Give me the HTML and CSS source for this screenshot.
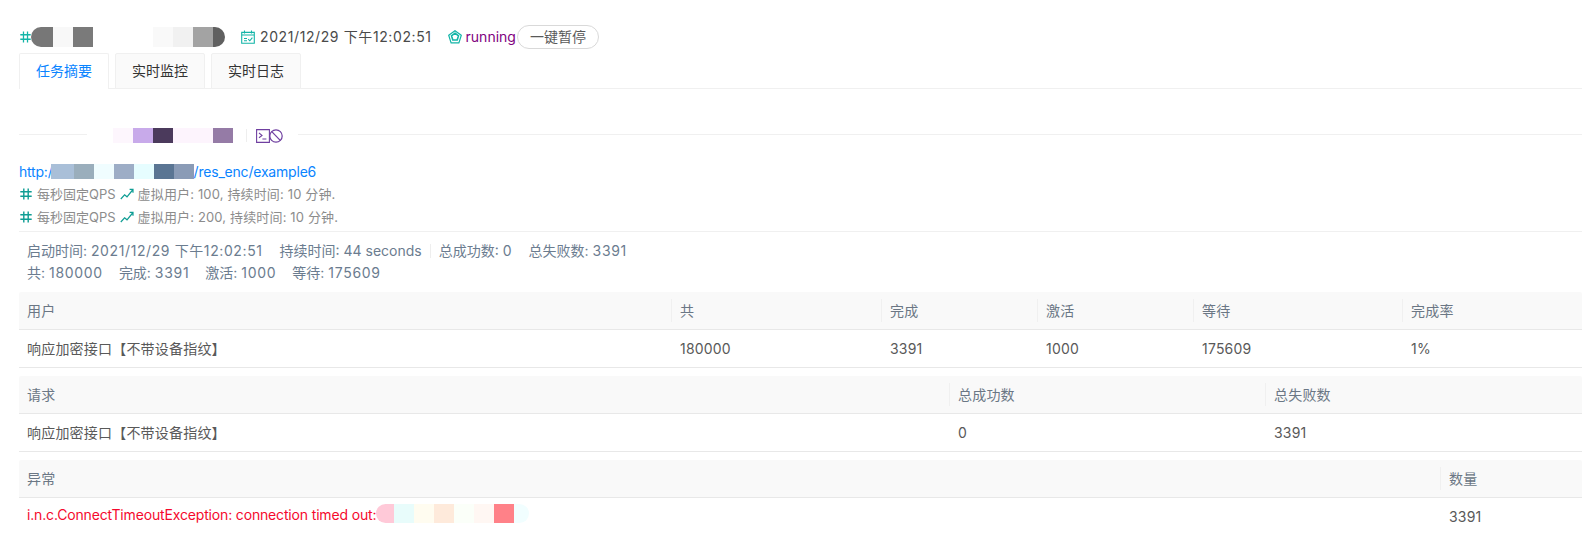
FILE: index.html
```html
<!DOCTYPE html>
<html lang="en">
<head>
    <meta charset="UTF-8">
    <title>任务摘要</title>
    <link rel="stylesheet" href="styles.css">
</head>
<body>
    <div class="page-header">
        <svg class="icon-hash" viewBox="0 0 12 12" preserveAspectRatio="none"><path d="M3.8 .5V11.5M8.2 .5V11.5M.3 3.8H11.7M.3 8.2H11.7"/></svg>
        <span class="mosaic mosaic-name"><i></i><i></i><i></i></span>
        <span class="mosaic mosaic-name2"><i></i><i></i><i></i><i></i></span>
        <svg class="icon-date" viewBox="0 0 14 14"><path d="M.7 2.4H13.3V13.3H.7ZM.7 5H13.3M3.5 .6V3.6M10.5 .6V3.6M3 8.5H6M7.2 9.2L8.8 10.8 11.4 7.6M3 10.8H6"/></svg>
        <span class="start-date">2021/12/29 下午12:02:51</span>
        <svg class="icon-state" viewBox="0 0 14 14"><path class="state-outer" d="M7 .7L13.3 5.3 10.9 12.9H3.1L.7 5.3Z"/><path class="state-inner" d="M7 3.2L10.5 5.8 9.2 10H4.8L3.5 5.8Z"/></svg>
        <span class="state">running</span>
        <button class="pause-btn">一键暂停</button>
    </div>

    <div class="tabs">
        <div class="tab tab-active">任务摘要</div>
        <div class="tab">实时监控</div>
        <div class="tab">实时日志</div>
    </div>

    <div class="divider">
        <span class="mosaic mosaic-title"><i></i><i></i><i></i><i></i><i></i></span>
        <span class="divider-sep"></span>
        <svg class="icon-term" viewBox="0 0 14 14"><path d="M.6 .6H13.4V13.4H.6ZM3 4L6 6.4 3 8.8M6.4 10H10.4"/></svg>
        <svg class="icon-stop" viewBox="0 0 14 14"><circle cx="7" cy="7" r="6.2"/><path d="M2.8 2.6L11.2 11.4"/></svg>
    </div>

    <div class="target-url">http:/<span class="mosaic mosaic-url"><i></i><i></i><i></i><i></i><i></i><i></i><i></i></span>/res_enc/example6</div>
    <div class="load-line">
        <svg class="icon-hash-sm" viewBox="0 0 12 12"><path d="M3.8 .5V11.5M8.2 .5V11.5M.3 3.8H11.7M.3 8.2H11.7"/></svg>
        <span>每秒固定QPS</span>
        <svg class="icon-rise" viewBox="0 0 14 12"><path d="M.8 11L4.6 6.8 7 8.8 12.6 2M9.6 1.4H13V4.8"/></svg>
        <span class="load-desc">虚拟用户: 100, 持续时间: 10 分钟.</span>
    </div>
    <div class="load-line">
        <svg class="icon-hash-sm" viewBox="0 0 12 12"><path d="M3.8 .5V11.5M8.2 .5V11.5M.3 3.8H11.7M.3 8.2H11.7"/></svg>
        <span>每秒固定QPS</span>
        <svg class="icon-rise" viewBox="0 0 14 12"><path d="M.8 11L4.6 6.8 7 8.8 12.6 2M9.6 1.4H13V4.8"/></svg>
        <span class="load-desc">虚拟用户: 200, 持续时间: 10 分钟.</span>
    </div>

    <div class="stats">
        <div class="stats-row">
            <span>启动时间: <span class="num-date">2021/12/29 下午12:02:51</span></span>
            <span>持续时间: 44 seconds</span>
            <span class="stats-sep"></span>
            <span>总成功数: 0</span>
            <span>总失败数: <span class="num">3391</span></span>
        </div>
        <div class="stats-row stats-row-tight">
            <span>共: <span class="num">180000</span></span>
            <span>完成: <span class="num">3391</span></span>
            <span>激活: <span class="num">1000</span></span>
            <span>等待: <span class="num">175609</span></span>
        </div>
    </div>

    <table class="grid grid-users">
        <thead>
            <tr><th>用户</th><th>共</th><th>完成</th><th>激活</th><th>等待</th><th>完成率</th></tr>
        </thead>
        <tbody>
            <tr><td>响应加密接口【不带设备指纹】</td><td>180000</td><td>3391</td><td>1000</td><td>175609</td><td>1%</td></tr>
        </tbody>
    </table>

    <table class="grid grid-requests">
        <thead>
            <tr><th>请求</th><th>总成功数</th><th>总失败数</th></tr>
        </thead>
        <tbody>
            <tr><td>响应加密接口【不带设备指纹】</td><td>0</td><td>3391</td></tr>
        </tbody>
    </table>

    <table class="grid grid-errors">
        <thead>
            <tr><th>异常</th><th>数量</th></tr>
        </thead>
        <tbody>
            <tr><td class="error-text">i.n.c.ConnectTimeoutException: connection timed out:<span class="mosaic mosaic-error"><i></i><i></i><i></i><i></i><i></i><i></i><i></i><i></i></span></td><td>3391</td></tr>
        </tbody>
    </table>
</body>
</html>
```

FILE: styles.css
```css
html, body {
    height: 533px;
    overflow: hidden;
}
body {
    margin: 0;
    padding: 0 5px 0 19px;
    background-color: #fff;
    color: #595959;
    font-family: Inter, "Noto Sans CJK SC", sans-serif;
    font-size: 14px;
    line-height: 22px;
}
svg {
    flex: none;
    fill: none;
}

/* blurred-out bits of the screenshot */
.mosaic {
    display: inline-flex;
    vertical-align: top;
}
.mosaic i {
    display: block;
    width: 20px;
    height: 100%;
}

.page-header {
    display: flex;
    align-items: center;
    height: 24px;
    padding-top: 25px;
}
.icon-hash {
    width: 11px;
    height: 12px;
    margin-left: 1px;
    stroke: #13b5a8;
    stroke-width: 1.4;
}
.mosaic-name {
    height: 20px;
    border-radius: 10px 0 0 10px;
    overflow: hidden;
}
.mosaic-name i:nth-child(1) { width: 22px; background: #777; }
.mosaic-name i:nth-child(2) { background: #f8f8f8; }
.mosaic-name i:nth-child(3) { background: #7a7a7a; }
.mosaic-name2 {
    height: 20px;
    margin-left: 60px;
    border-radius: 0 10px 10px 0;
    overflow: hidden;
}
.mosaic-name2 i:nth-child(1) { background: #f9f9f9; }
.mosaic-name2 i:nth-child(2) { background: #f1f1f1; }
.mosaic-name2 i:nth-child(3) { background: #a3a3a3; }
.mosaic-name2 i:nth-child(4) { width: 12px; background: #606060; }
.icon-date {
    width: 14px;
    height: 14px;
    margin-left: 16px;
    stroke: #13b5a8;
    stroke-width: 1.1;
}
.start-date {
    margin-left: 5px;
    color: #4a4a4a;
    letter-spacing: .6px;
    white-space: nowrap;
}
.icon-state {
    width: 14px;
    height: 14px;
    margin-left: 16px;
}
.state-outer {
    stroke: #13b5a8;
    stroke-width: 1.2;
}
.state-inner {
    stroke: #13b5a8;
    stroke-width: 1.6;
}
.state {
    margin-left: 4px;
    color: #800080;
}
.pause-btn {
    width: 82px;
    height: 24px;
    margin-left: 1px;
    padding: 0;
    border: 1px solid #d9d9d9;
    border-radius: 12px;
    background: #fff;
    color: #595959;
    font: inherit;
}

.tabs {
    display: flex;
    gap: 6px;
    height: 35px;
    margin-top: 4px;
    border-bottom: 1px solid #f0f0f0;
}
.tab {
    width: 88px;
    height: 34px;
    border: 1px solid #f0f0f0;
    border-radius: 2px 2px 0 0;
    background: #fafafa;
    color: #333;
    line-height: 34px;
    text-align: center;
}
.tab-active {
    height: 35px;
    border-bottom: none;
    background: #fff;
    color: #0a84ff;
}

.divider {
    display: flex;
    align-items: center;
    height: 15px;
    margin-top: 39px;
    padding-left: 68px;
    position: relative;
}
.divider::before,
.divider::after {
    content: "";
    position: absolute;
    top: 6px;
    height: 1px;
    background: #f0f0f0;
}
.divider::before {
    left: 0;
    width: 68px;
}
.divider::after {
    left: 279px;
    right: 0;
}
.mosaic-title {
    height: 15px;
    padding-left: 26px;
}
.mosaic-title i:nth-child(1) { background: #fdf6fd; }
.mosaic-title i:nth-child(2) { background: #c8aaea; }
.mosaic-title i:nth-child(3) { background: #4b3a5c; }
.mosaic-title i:nth-child(4) { width: 40px; background: #fdf4fd; }
.mosaic-title i:nth-child(5) { background: #957ba6; }
.divider-sep {
    width: 1px;
    height: 13px;
    margin-left: 13px;
    background: #eee;
}
.icon-term {
    width: 14px;
    height: 14px;
    margin-left: 9px;
    stroke: #6f3fa0;
    stroke-width: 1.1;
}
.icon-stop {
    width: 14px;
    height: 14px;
    margin-left: -1px;
    stroke: #6f3fa0;
    stroke-width: 1.2;
}

.target-url {
    height: 21px;
    margin-top: 18px;
    color: #0a84ff;
    letter-spacing: -.2px;
}
.mosaic-url {
    height: 15px;
    margin-top: 3px;
    margin-left: -2px;
}
.mosaic-url i:nth-child(1) { width: 23px; background: #a9bfd8; }
.mosaic-url i:nth-child(2) { background: #9aaebc; }
.mosaic-url i:nth-child(3) { background: #f0fdff; }
.mosaic-url i:nth-child(4) { background: #9dadc6; }
.mosaic-url i:nth-child(5) { background: #e6fdff; }
.mosaic-url i:nth-child(6) { background: #5a7593; }
.mosaic-url i:nth-child(7) { background: #8a9bb6; }

.load-line {
    display: flex;
    align-items: center;
    height: 23px;
    color: #8c8c8c;
    font-size: 13px;
}
.load-desc {
    margin-left: -1px;
    letter-spacing: .15px;
}
.icon-hash-sm {
    width: 12px;
    height: 12px;
    margin: 0 5px 0 1px;
    stroke: #0f9d94;
    stroke-width: 1.4;
}
.icon-rise {
    width: 14px;
    height: 12px;
    margin: 0 5px 0 4px;
    stroke: #0f9d94;
    stroke-width: 1.2;
}

.stats {
    margin-top: 3px;
    padding: 8px 8px 8px;
    border-top: 1px solid #f0f0f0;
    color: #6b7c8f;
}
.stats-row {
    display: flex;
    align-items: center;
    gap: 17px;
    height: 22px;
}
.stats-row-tight {
    gap: 16px;
}
.stats-sep {
    width: 1px;
    height: 14px;
    margin: 0 -9px;
    background: #eee;
}
.num-date {
    letter-spacing: .6px;
}
.num {
    letter-spacing: .7px;
}

.grid {
    width: 100%;
    margin-bottom: 8px;
    border-collapse: separate;
    border-spacing: 0;
    table-layout: fixed;
}
.grid th,
.grid td {
    box-sizing: border-box;
    height: 38px;
    padding: 0 8px 0 9px;
    border-bottom: 1px solid #e8e8e8;
    font-weight: 400;
    letter-spacing: .2px;
    text-align: left;
    white-space: nowrap;
}
.grid th:first-child,
.grid td:first-child {
    padding-left: 8px;
}
.grid th {
    position: relative;
    background: #f9f9f9;
    color: #6b7785;
}
.grid th + th::before {
    content: "";
    position: absolute;
    left: 0;
    top: 7px;
    width: 1px;
    height: 23px;
    background: #f0f0f0;
}
.grid th:first-child {
    border-top-left-radius: 2px;
}
.grid th:last-child {
    border-top-right-radius: 2px;
}
.grid-users th:nth-child(1) { width: 652px; }
.grid-users th:nth-child(2) { width: 210px; }
.grid-users th:nth-child(3) { width: 156px; }
.grid-users th:nth-child(4) { width: 156px; }
.grid-users th:nth-child(5) { width: 209px; }
.grid-requests th:nth-child(1) { width: 930px; }
.grid-requests th:nth-child(2) { width: 316px; }
.grid-errors th:nth-child(1) { width: 1421px; }
.grid td.error-text {
    color: #f5092d;
    letter-spacing: -.16px;
}
.mosaic-error {
    height: 19px;
    margin-bottom: 6px;
    border-radius: 10px;
    overflow: hidden;
    vertical-align: middle;
}
.mosaic-error i:nth-child(1) { width: 18px; background: #ffc9d8; }
.mosaic-error i:nth-child(2) { background: #e8fcfb; }
.mosaic-error i:nth-child(3) { background: #fffcf0; }
.mosaic-error i:nth-child(4) { background: #feeadb; }
.mosaic-error i:nth-child(5) { background: #fbfff9; }
.mosaic-error i:nth-child(6) { background: #fff7f3; }
.mosaic-error i:nth-child(7) { background: #ff8188; }
.mosaic-error i:nth-child(8) { width: 15px; background: #f1feff; }
```
